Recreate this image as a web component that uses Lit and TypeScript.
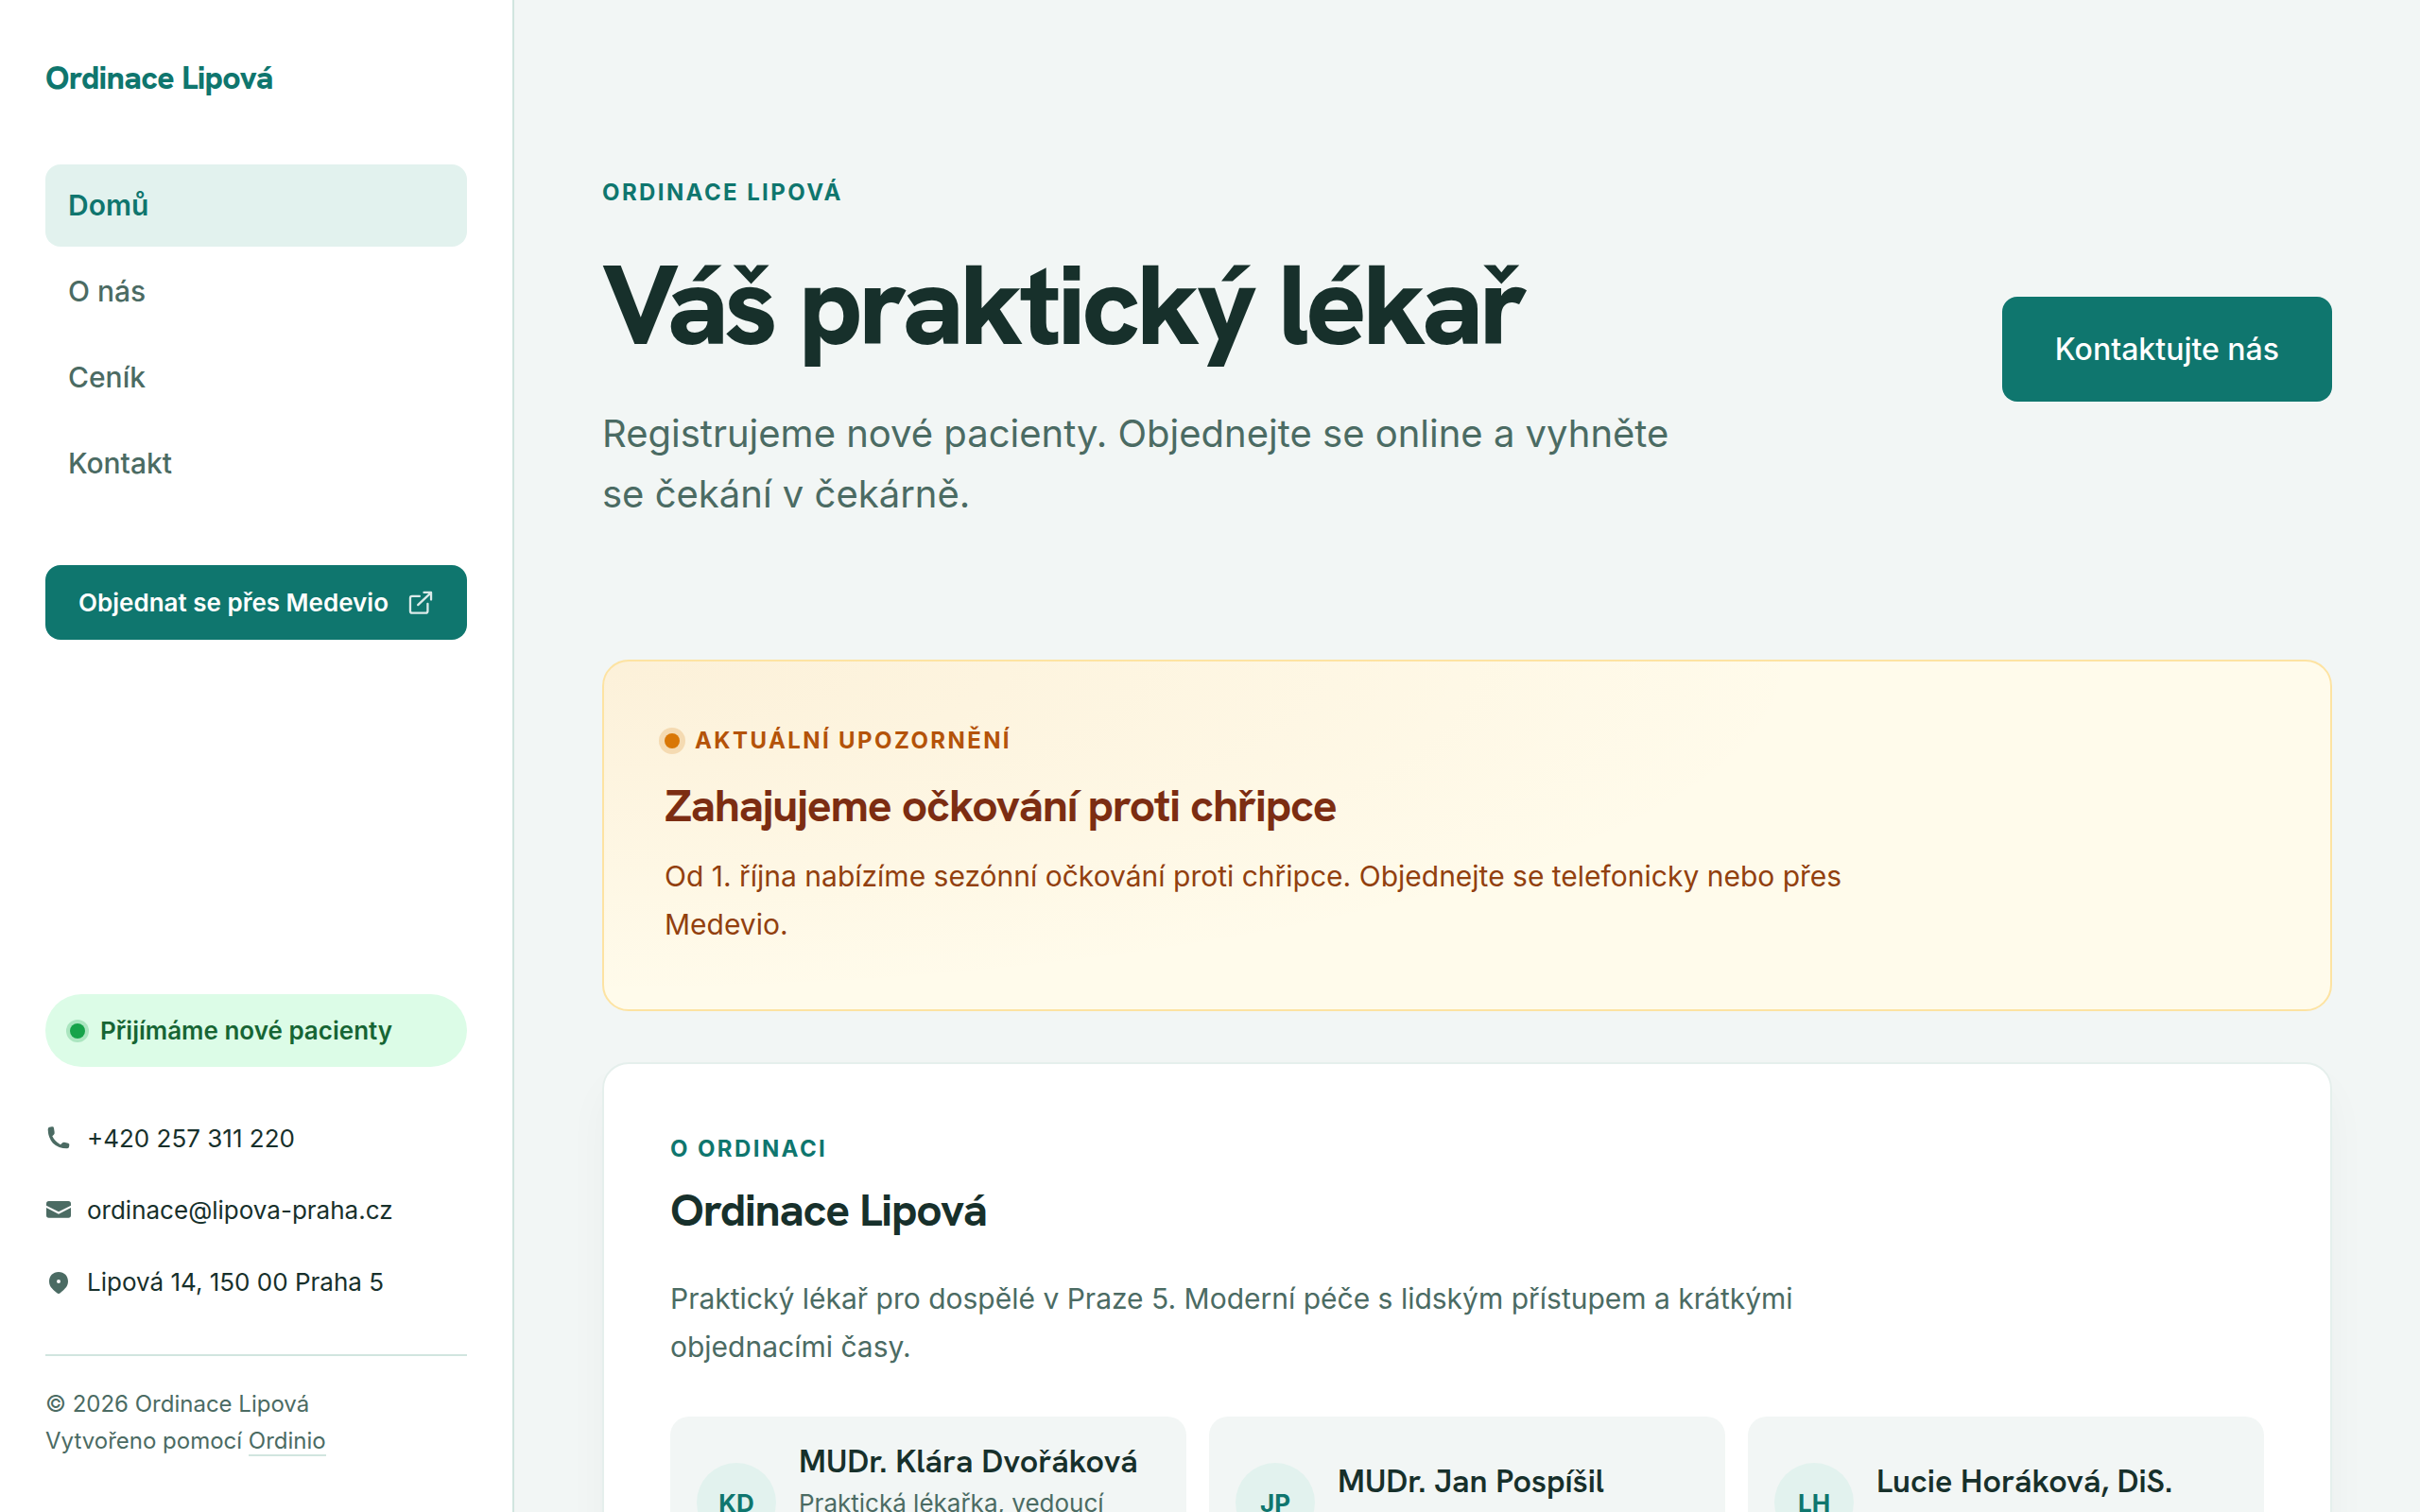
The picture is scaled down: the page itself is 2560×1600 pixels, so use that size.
import { LitElement, html, css, svg } from "lit";
import { customElement } from "lit/decorators.js";
import { classMap } from "lit/directives/class-map.js";

const navItems = [
  { label: "Domů", href: "#domu", active: true },
  { label: "O nás", href: "#o-nas", active: false },
  { label: "Ceník", href: "#cenik", active: false },
  { label: "Kontakt", href: "#kontakt", active: false },
];

const phoneIcon = svg`<svg class="icon" viewBox="24 30 84 84" aria-hidden="true"><path d="M37 35L45 34Q50 33 51 38L53 51Q54 57 50 60L46 64Q54 81 72 91L76 87Q79 83 84 83L96 86Q101 87 100 92L99 98Q98 103 92 103Q66 103 48 86Q33 70 32 43Q32 36 37 35Z"/></svg>`;
const mailIcon = svg`<svg class="icon" viewBox="24 258 84 84" aria-hidden="true"><path d="M35 270H97Q105 270 105 278V284L66 304L27 284V278Q27 270 35 270Z"/><path d="M27 291L66 311L105 291V315Q105 323 97 323H35Q27 323 27 315Z"/></svg>`;
const pinIcon = svg`<svg class="icon" viewBox="24 486 84 84" aria-hidden="true"><path fill-rule="evenodd" d="M66 495C84 495 96 508 96 525C96 544 80 553 72 561Q66 567 60 561C52 553 36 544 36 525C36 508 48 495 66 495ZM66 519A6 6 0 1 0 66 531A6 6 0 1 0 66 519Z"/></svg>`;
const externalIcon = svg`<svg class="external" viewBox="21 39 85 85" aria-hidden="true"><path d="M60 60H36Q30 60 30 66V108Q30 114 36 114H80Q86 114 86 108V84M55 88L96 49M74 48H97V71"/></svg>`;

const contacts = [
  { icon: phoneIcon, label: "+420 257 311 220", href: "tel:+420257311220" },
  { icon: mailIcon, label: "ordinace@lipova-praha.cz", href: "mailto:ordinace@lipova-praha.cz" },
  { icon: pinIcon, label: "Lipová 14, 150 00 Praha 5", href: "#mapa" },
];

const team = [
  { initials: "KD", name: "MUDr. Klára Dvořáková", role: "Praktická lékařka, vedoucí ordinace" },
  { initials: "JP", name: "MUDr. Jan Pospíšil", role: "Praktický lékař" },
  { initials: "LH", name: "Lucie Horáková, DiS.", role: "Zdravotní sestra" },
];

@customElement("app-root")
export class AppRoot extends LitElement {
  static styles = css`
    :host {
      --teal: #0f766e;
      --ink: #17302b;
      --muted: #4b6b63;
      --line: #d1e5df;
      --page: #f2f6f5;
      --mint: #e2f2ee;
      --heading: "Hanken Grotesk", Inter, sans-serif;
      display: grid;
      grid-template-columns: 544px minmax(0, 1fr);
      min-height: 100vh;
      background: var(--page);
      color: var(--ink);
      font-family: Inter, "Liberation Sans", sans-serif;
    }
    * { box-sizing: border-box; }
    h1, h2, h3, p, ul { margin: 0; padding: 0; }
    ul { list-style: none; }
    a { color: inherit; text-decoration: none; }

    .sidebar {
      position: sticky;
      top: 0;
      align-self: start;
      height: 100vh;
      display: flex;
      flex-direction: column;
      padding: 56px 48px;
      background: #fff;
      border-right: 2px solid var(--line);
    }
    .logo {
      font: 800 34px/52px var(--heading);
      letter-spacing: -0.02em;
      color: var(--teal);
    }
    .nav { display: grid; gap: 4px; margin-top: 66px; }
    .nav-link {
      display: block;
      padding: 20px 24px;
      border-radius: 16px;
      font-size: 30px;
      line-height: 47px;
      font-weight: 500;
      color: var(--muted);
    }
    .nav-link.active { background: var(--mint); color: var(--teal); font-weight: 600; }
    .book {
      display: flex;
      align-items: center;
      justify-content: center;
      gap: 20px;
      margin-top: 64px;
      padding: 20px 24px;
      border-radius: 16px;
      background: var(--teal);
      color: #fff;
      font-size: 26px;
      line-height: 39px;
      font-weight: 600;
      white-space: nowrap;
    }
    .external {
      width: 28px;
      height: 28px;
      fill: none;
      stroke: #fff;
      stroke-width: 7;
      stroke-linecap: round;
      stroke-linejoin: round;
      opacity: 0.85;
    }
    .status {
      display: flex;
      align-items: center;
      gap: 16px;
      margin-top: auto;
      padding: 18px 26px;
      border-radius: 999px;
      background: #dcfce7;
      color: #166534;
      font-size: 26px;
      line-height: 41px;
      font-weight: 600;
    }
    .dot { flex: none; width: 16px; height: 16px; border-radius: 50%; }
    .dot.green { background: #16a34a; box-shadow: 0 0 0 4px rgba(22, 163, 74, 0.25); }
    .dot.amber { background: #d97706; box-shadow: 0 0 0 6px rgba(217, 119, 6, 0.2); }
    .contacts { margin: 38px 0; }
    .contact {
      display: flex;
      align-items: center;
      gap: 16px;
      padding: 18px 0;
      font-size: 26px;
      line-height: 40px;
    }
    .icon { flex: none; width: 28px; height: 28px; fill: var(--muted); }
    .footer {
      padding-top: 31px;
      border-top: 2px solid var(--line);
      font-size: 24px;
      line-height: 39px;
      color: var(--muted);
    }
    .footer a { border-bottom: 2px solid var(--line); }

    .main {
      width: 100%;
      max-width: 2016px;
      margin: 0 auto;
      padding: 184px 93px 112px;
    }
    .hero {
      display: flex;
      align-items: center;
      justify-content: space-between;
      gap: 64px;
      margin-bottom: 143px;
    }
    .kicker {
      font-size: 24px;
      line-height: 39px;
      font-weight: 700;
      letter-spacing: 0.1em;
      text-transform: uppercase;
      color: var(--teal);
    }
    h1 {
      margin: 32px 0 38px;
      font: 800 120px/134px var(--heading);
      letter-spacing: -0.04em;
    }
    .lead { max-width: 1152px; font-size: 40px; line-height: 64px; color: var(--muted); }
    .cta {
      flex: none;
      padding: 32px 56px;
      border-radius: 16px;
      background: var(--teal);
      color: #fff;
      font-size: 32px;
      line-height: 47px;
      font-weight: 500;
    }
    .notice {
      margin-bottom: 54px;
      padding: 64px;
      border: 2px solid #fde3a2;
      border-radius: 28px;
      background: radial-gradient(70% 96% at 0 0, rgba(217, 119, 6, 0.08), rgba(217, 119, 6, 0)) #fffbeb;
    }
    .notice .kicker { display: flex; align-items: center; gap: 16px; color: #b45309; }
    h2 { font: 700 48px/60px var(--heading); letter-spacing: -0.025em; }
    .notice h2 { margin-top: 20px; color: #7c2d12; }
    .text { max-width: 1280px; font-size: 30px; line-height: 51px; }
    .notice .text { margin-top: 19px; color: #92400e; }
    .card {
      padding: 70px;
      border: 2px solid #e5efec;
      border-radius: 28px;
      background: #fff;
      box-shadow: 0 24px 48px -4px rgba(23, 48, 43, 0.04);
    }
    .card h2 { margin-top: 16px; }
    .card .text { margin-top: 38px; color: var(--muted); }
    .team {
      display: grid;
      grid-template-columns: repeat(3, minmax(0, 1fr));
      gap: 24px;
      margin-top: 48px;
    }
    .member {
      display: flex;
      align-items: center;
      gap: 24px;
      padding: 27px 28px;
      border-radius: 20px;
      background: var(--page);
    }
    .avatar {
      flex: none;
      display: grid;
      place-items: center;
      width: 84px;
      height: 84px;
      border-radius: 50%;
      background: var(--mint);
      color: var(--teal);
      font-size: 26px;
      font-weight: 700;
    }
    h3 { margin-bottom: 4px; font: 600 34px/40px var(--heading); }
    .role { font-size: 26px; line-height: 42px; color: var(--muted); }
  `;

  render() {
    return html`
      <aside class="sidebar">
        <a class="logo" href="#domu">Ordinace Lipová</a>
        <nav class="nav">
          ${navItems.map(
            (n) => html`<a class=${classMap({ "nav-link": true, active: n.active })} href=${n.href}>${n.label}</a>`
          )}
        </nav>
        <a class="book" href="#medevio">Objednat se přes Medevio ${externalIcon}</a>
        <p class="status"><span class="dot green"></span>Přijímáme nové pacienty</p>
        <ul class="contacts">
          ${contacts.map((c) => html`<li><a class="contact" href=${c.href}>${c.icon}${c.label}</a></li>`)}
        </ul>
        <footer class="footer">
          <p>© 2026 Ordinace Lipová</p>
          <p>Vytvořeno pomocí <a href="#ordinio">Ordinio</a></p>
        </footer>
      </aside>
      <main class="main">
        <header class="hero">
          <div>
            <p class="kicker">Ordinace Lipová</p>
            <h1>Váš praktický lékař</h1>
            <p class="lead">Registrujeme nové pacienty. Objednejte se online a vyhněte se čekání v čekárně.</p>
          </div>
          <a class="cta" href="#kontakt">Kontaktujte nás</a>
        </header>
        <section class="notice">
          <p class="kicker"><span class="dot amber"></span>Aktuální upozornění</p>
          <h2>Zahajujeme očkování proti chřipce</h2>
          <p class="text">Od 1. října nabízíme sezónní očkování proti chřipce. Objednejte se telefonicky nebo přes Medevio.</p>
        </section>
        <section class="card">
          <p class="kicker">O ordinaci</p>
          <h2>Ordinace Lipová</h2>
          <p class="text">Praktický lékař pro dospělé v Praze 5. Moderní péče s lidským přístupem a krátkými objednacími časy.</p>
          <div class="team">
            ${team.map(
              (m) => html`<article class="member">
                <span class="avatar">${m.initials}</span>
                <div>
                  <h3>${m.name}</h3>
                  <p class="role">${m.role}</p>
                </div>
              </article>`
            )}
          </div>
        </section>
      </main>
    `;
  }
}
